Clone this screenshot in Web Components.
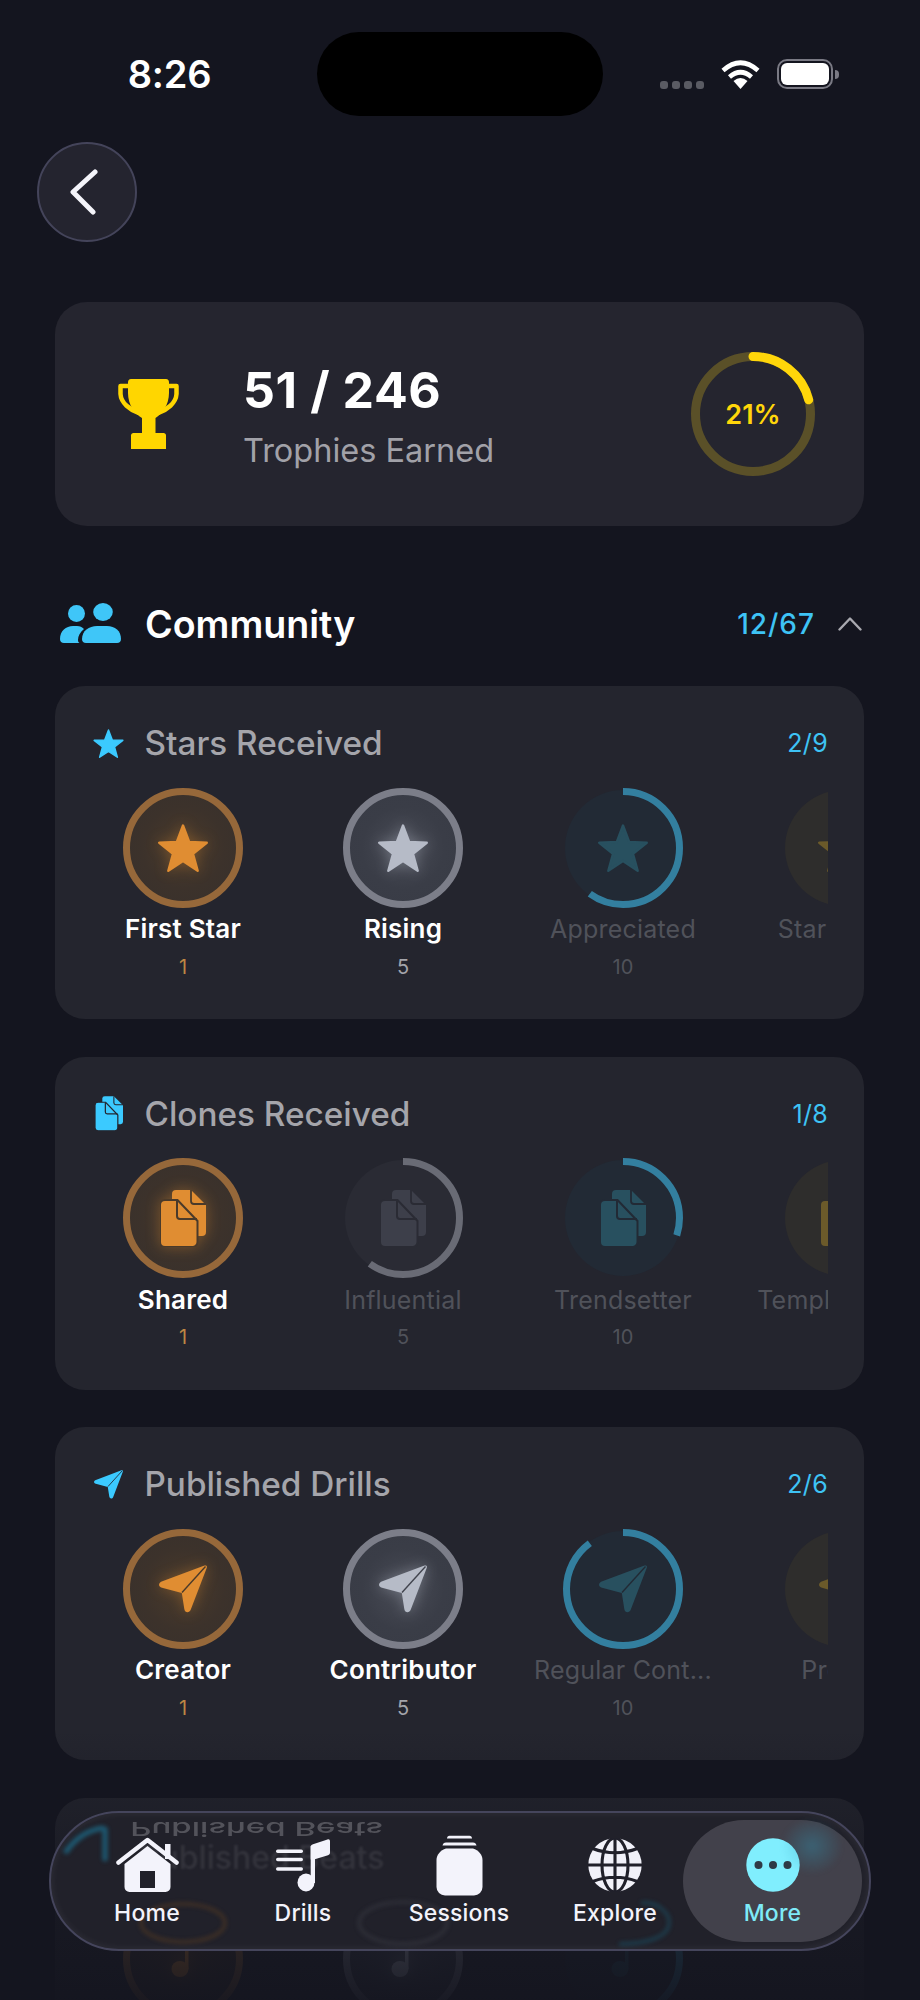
<!DOCTYPE html>
<html>
<head>
<meta charset="utf-8">
<title>Trophies</title>
<style>
    html, body { margin: 0; background: #14151f; }
    body { width: 920px; height: 2000px; overflow: hidden; font-family: Inter, "Noto Sans", sans-serif; }
</style>
</head>
<body>
<trophy-page>
    <status-bar></status-bar>
    <back-button></back-button>
    <trophy-summary earned="51" total="246" percent="21"></trophy-summary>
    <section-header icon="people" count="12/67">Community</section-header>

    <trophy-group icon="star" count="2/9" heading="Stars Received">
        <trophy-badge tier="bronze" icon="star" label="First Star" value="1" progress="100"></trophy-badge>
        <trophy-badge tier="silver" icon="star" label="Rising" value="5" progress="100"></trophy-badge>
        <trophy-badge tier="blue" icon="star" label="Appreciated" value="10" progress="60" locked></trophy-badge>
        <trophy-badge tier="gold" icon="star" label="Star Maker" value="25" progress="0" locked></trophy-badge>
    </trophy-group>
    <trophy-group icon="docs" count="1/8" heading="Clones Received">
        <trophy-badge tier="bronze" icon="docs" label="Shared" value="1" progress="100"></trophy-badge>
        <trophy-badge tier="gray" icon="docs" label="Influential" value="5" progress="60" locked></trophy-badge>
        <trophy-badge tier="blue" icon="docs" label="Trendsetter" value="10" progress="30" locked></trophy-badge>
        <trophy-badge tier="gold" icon="docs" label="Template King" value="25" progress="0" locked></trophy-badge>
    </trophy-group>
    <trophy-group icon="send" count="2/6" heading="Published Drills">
        <trophy-badge tier="bronze" icon="send" label="Creator" value="1" progress="100"></trophy-badge>
        <trophy-badge tier="silver" icon="send" label="Contributor" value="5" progress="100"></trophy-badge>
        <trophy-badge tier="blue" icon="send" label="Regular Cont..." value="10" progress="90" locked></trophy-badge>
        <trophy-badge tier="gold" icon="send" label="Prolific" value="25" progress="0" locked></trophy-badge>
    </trophy-group>
    <trophy-group icon="note" heading="Published Beats">
        <trophy-badge tier="bronze" icon="note" progress="100"></trophy-badge>
        <trophy-badge tier="silver" icon="note" progress="100"></trophy-badge>
        <trophy-badge tier="blue" icon="note" progress="60" locked></trophy-badge>
    </trophy-group>

    <tab-bar slot="overlay">
        <tab-item icon="home" style="--icon-w:63px;--icon-h:56px">Home</tab-item>
        <tab-item icon="drills" style="--icon-w:54px;--icon-h:54px">Drills</tab-item>
        <tab-item icon="bottle" style="--icon-w:47px;--icon-h:61px">Sessions</tab-item>
        <tab-item icon="globe" style="--icon-w:54px;--icon-h:54px">Explore</tab-item>
        <tab-item icon="more" active style="--icon-w:54px;--icon-h:54px">More</tab-item>
    </tab-bar>
</trophy-page>

<script>
const ICONS = {
    star: `<svg viewBox="0 0 50 48"><polygon fill="currentColor" stroke="currentColor" stroke-width="2.4" stroke-linejoin="round" points="25,1.5 31.17,18 48.78,18.77 34.99,29.74 39.69,46.73 25,37 10.31,46.73 15.01,29.74 1.22,18.77 18.83,18"/></svg>`,
    docs: `<svg viewBox="0 0 46 57">
        <path fill="currentColor" d="M16 0H31L46 15V42a4 4 0 0 1-4 4H16a4 4 0 0 1-4-4V4a4 4 0 0 1 4-4Z"/>
        <path fill="none" stroke="var(--cut)" stroke-width="1.8" d="M31 0V11a3 3 0 0 0 3 3H46"/>
        <path fill="currentColor" stroke="var(--cut)" stroke-width="2" d="M5 10H17.5L37.5 31V52a5 5 0 0 1-5 5H5a5 5 0 0 1-5-5V15a5 5 0 0 1 5-5Z"/>
        <path fill="none" stroke="var(--cut)" stroke-width="2" d="M17 11V26a3 3 0 0 0 3 3H37"/>
    </svg>`,
    send: `<svg viewBox="0 0 48 48">
        <path fill="currentColor" d="M45.5.6C47.4-.1 48.4 1 47.7 3L31.8 44.5C30.3 48.5 25.9 48 25.3 44L22.8 28 3 22.8C-.6 21.7-.9 18.6 2 16.8Z"/>
        <path fill="none" stroke="var(--cut)" stroke-width="1.4" d="M46.5 1.5 23 27.5"/>
    </svg>`,
    note: `<svg viewBox="0 0 24 36"><ellipse cx="9" cy="28" rx="8.5" ry="8" fill="currentColor"/><rect x="14" y="2" width="3.5" height="26" fill="currentColor"/></svg>`,
    people: `<svg viewBox="0 0 61 40" fill="currentColor">
        <ellipse cx="16.5" cy="10.5" rx="8.5" ry="8.5"/>
        <ellipse cx="43" cy="9" rx="9.8" ry="9"/>
        <path d="M0 36C0 28 6 23 13 23H17C20 23 22 24 24 26 20 29 18 33 18 37 18 38.5 18.6 39.500 19.500 40H4C1.500 40 0 38.500 0 36Z"/>
        <path d="M22 36C22 28 29 23 37 23H47C55 23 61 28 61 36 61 38.500 59.500 40 57 40H26C23.500 40 22 38.500 22 36Z"/>
    </svg>`,
    trophy: `<svg viewBox="0 0 61 70">
        <path fill="none" stroke="#ffd600" stroke-width="4.500" stroke-linejoin="round" d="M14 7H2.500V15C3 24 12 31 21 34M47 7H58.500V15C58 24 49 31 40 34"/>
        <path fill="#ffd600" d="M13 0H48C50 0 51 1.500 51 3.500V14C51 26 44 35 37.500 39V56H24V39C17 35 10 26 10 14V3.500C10 1.500 11 0 13 0Z"/>
        <path fill="#ffd600" d="M15.500 54H45.500C47 54 48 55 48 56.500V70H13V56.500C13 55 14 54 15.500 54Z"/>
    </svg>`,
    home: `<svg viewBox="0 0 63 56">
        <path fill="#f3f3fb" d="M31.500 9 54.500 27V50a5 5 0 0 1-5 5H13.500a5 5 0 0 1-5-5V27ZM24 34V51H39V34Z" fill-rule="evenodd"/>
        <rect x="49" y="7" width="5.500" height="15" fill="#f3f3fb"/>
        <path fill="none" stroke="#f3f3fb" stroke-width="4.500" stroke-linecap="round" stroke-linejoin="round" d="M2.500 25.500 31.500 3 60.500 25.500"/>
    </svg>`,
    drills: `<svg viewBox="0 0 54 54" fill="#f3f3fb">
        <rect x="0" y="11.500" width="27" height="3.400" rx="1.700"/>
        <rect x="0" y="19.800" width="27" height="3.400" rx="1.700"/>
        <rect x="0" y="29.300" width="27" height="3.400" rx="1.700"/>
        <ellipse cx="30" cy="44.500" rx="8.500" ry="9" />
        <rect x="34.700" y="8" width="4.300" height="37"/>
        <path d="M34.700 9C34.700 7.500 35.500 6.700 37 6.200L51.500 1.500C53 1 54 1.800 54 3.300V14.500C54 16 53.300 16.800 52 17.200L38 21.500H34.700Z"/>
    </svg>`,
    bottle: `<svg viewBox="0 0 47 61" fill="#f3f3fb">
        <path d="M11 3.500C11 2 12 .8 13.500 .8H33.500C35 .8 36 2 36 3.500H11Z"/>
        <path d="M6.500 10.500C7 8.500 8 7.500 10 7.500H37C39 7.500 40 8.500 40.500 10.500Z"/>
        <path d="M10 13.500H37C42.500 15.500 46.500 19.500 46.500 25V52a8.500 8.500 0 0 1-8.500 8.500H9a8.500 8.500 0 0 1-8.500-8.500V25C.5 19.500 4.500 15.500 10 13.500Z"/>
    </svg>`,
    globe: `<svg viewBox="0 0 54 54">
        <circle cx="27" cy="27" r="26.700" fill="#f1f1f9"/>
        <g fill="none" stroke="#20202a" stroke-width="3.100">
            <ellipse cx="27" cy="27" rx="13" ry="27"/>
            <path d="M27 0V54M0 27H54M4.500 10.500Q27 19 49.500 10.500M4.500 43.500Q27 35 49.500 43.500"/>
        </g>
    </svg>`,
    more: `<svg viewBox="0 0 54 54"><circle cx="27" cy="27" r="26.700" fill="#80eefe"/><g fill="#2e3a46"><circle cx="12.500" cy="27" r="4"/><circle cx="27" cy="27" r="4"/><circle cx="41.500" cy="27" r="4"/></g></svg>`
};

const TIERS = {
    bronze: { ring: '#96683a', fill: 'radial-gradient(circle, #4a3a2a 0%, #3c322b 50%, #37302c 100%)', icon: '#e08d32', value: '#bd8744', cut: '#4a3a2a', glow: 'rgba(224,141,50,.35)' },
    silver: { ring: '#7c7e89', fill: 'radial-gradient(circle, #484b55 0%, #3a3d47 50%, #383b45 100%)', icon: '#b6bbc7', value: '#a3a4aa', cut: '#41444e', glow: 'rgba(200,205,220,.35)' },
    blue: { ring: '#337f9f', fill: '#222a35', icon: '#28505f', value: '#50525a', cut: '#222a35' },
    gray: { ring: '#696b75', fill: '#2a2b34', icon: '#3d3f4a', value: '#50525a', cut: '#2a2b34' },
    gold: { ring: 'transparent', fill: '#2e2d2c', icon: '#6b5a2a', value: '#50525a', cut: '#2e2d2c' }
};

class TrophyPage extends HTMLElement {
    connectedCallback() {
        this.attachShadow({ mode: 'open' });
        this.shadowRoot.innerHTML = `
            <style>
                :host {
                    display: block;
                    position: relative;
                    width: 920px;
                    height: 2000px;
                    overflow: hidden;
                    background: #14151f;
                    color: #fff;
                }
                .fade {
                    position: absolute;
                    left: 0;
                    right: 0;
                    top: 1730px;
                    bottom: 0;
                    background: linear-gradient(rgba(20,21,31,0), rgba(20,21,31,.3) 27%, rgba(20,21,31,.78) 70%, rgba(20,21,31,.95) 100%);
                }
            </style>
            <slot></slot>
            <div class="fade"></div>
            <slot name="overlay"></slot>
        `;
    }
}

class StatusBar extends HTMLElement {
    connectedCallback() {
        this.attachShadow({ mode: 'open' });
        this.shadowRoot.innerHTML = `
            <style>
                :host {
                    display: grid;
                    grid-template-columns: 317px 286px 1fr;
                    align-items: center;
                    height: 84px;
                    padding-top: 32px;
                    padding-bottom: 26px;
                }
                .time {
                    font-size: 38px;
                    font-weight: 600;
                    line-height: 44px;
                    text-align: center;
                    padding-left: 22px;
                    letter-spacing: -.2px;
                }
                .island {
                    height: 84px;
                    border-radius: 42px;
                    background: #000;
                }
                .right {
                    display: flex;
                    align-items: flex-end;
                    padding-left: 57px;
                }
                .dots { display: flex; gap: 4.300px; margin-right: 17px; }
                .dots i { width: 7.800px; height: 8px; border-radius: 3px; background: #5a5b63; }
                .battery {
                    box-sizing: border-box;
                    width: 56px;
                    height: 30px;
                    margin-left: 17px;
                    border: 2.500px solid #7a7a84;
                    border-radius: 10px;
                    padding: 2px;
                }
                .battery i { display: block; height: 100%; border-radius: 6px; background: #fff; }
                .nub { width: 4px; height: 9px; margin: 0 0 10px 1.500px; border-radius: 0 4px 4px 0; background: #7a7a84; }
            </style>
            <div class="time">8:26</div>
            <div class="island"></div>
            <div class="right">
                <div class="dots"><i></i><i></i><i></i><i></i></div>
                <svg width="39" height="29" viewBox="0 0 39 29">
                    <path fill="none" stroke="#fff" stroke-width="4.600" d="M2 10.500Q19.500 -5 37 10.500M8.500 17Q19.500 7.500 30.500 17"/>
                    <path fill="#fff" d="M19.500 29 12.500 21Q19.500 15 26.500 21Z"/>
                </svg>
                <div class="battery"><i></i></div>
                <div class="nub"></div>
            </div>
        `;
    }
}

class BackButton extends HTMLElement {
    connectedCallback() {
        this.attachShadow({ mode: 'open' });
        this.shadowRoot.innerHTML = `
            <style>
                :host {
                    display: flex;
                    align-items: center;
                    justify-content: center;
                    box-sizing: border-box;
                    width: 100px;
                    height: 100px;
                    margin-left: 37px;
                    border-radius: 50%;
                    background: #24242f;
                    border: 2px solid #44445a;
                }
            </style>
            <svg width="32" height="46" viewBox="0 0 32 46" style="margin-right:4px">
                <path fill="none" stroke="#f4f4fa" stroke-width="5" stroke-linecap="round" stroke-linejoin="round" d="M26 3 4 23 24 43"/>
            </svg>
        `;
    }
}

class TrophySummary extends HTMLElement {
    connectedCallback() {
        const pct = this.getAttribute('percent');
        this.attachShadow({ mode: 'open' });
        this.shadowRoot.innerHTML = `
            <style>
                :host {
                    display: flex;
                    align-items: center;
                    box-sizing: border-box;
                    width: 809px;
                    height: 224px;
                    margin: 60px 0 0 55px;
                    padding: 0 49px 0 63px;
                    border-radius: 32px;
                    background: #25252f;
                }
                .cup { width: 61px; height: 70px; flex: none; margin-right: 64px; }
                .cup svg { display: block; width: 100%; height: 100%; }
                .text { flex: 1; margin-top: 4px; }
                .score { font-size: 50px; font-weight: 700; line-height: 56px; letter-spacing: .6px; }
                .sub { font-size: 32.500px; line-height: 40px; margin-top: 13px; color: #a1a1a8; }
                .ring { display: grid; place-items: center; width: 124px; height: 124px; flex: none; }
                .ring > * { grid-area: 1 / 1; }
                .ring span { font-size: 27px; font-weight: 600; color: #ffd60a; }
            </style>
            <div class="cup">${ICONS.trophy}</div>
            <div class="text">
                <div class="score">${this.getAttribute('earned')} / ${this.getAttribute('total')}</div>
                <div class="sub">Trophies Earned</div>
            </div>
            <div class="ring">
                <svg width="124" height="124" viewBox="0 0 124 124">
                    <circle cx="62" cy="62" r="57.500" fill="none" stroke="#5a5028" stroke-width="9"/>
                    <circle cx="62" cy="62" r="57.500" fill="none" stroke="#ffd60a" stroke-width="9" stroke-linecap="round"
                        pathLength="100" stroke-dasharray="${pct} 100" transform="rotate(-90 62 62)"/>
                </svg>
                <span>${pct}%</span>
            </div>
        `;
    }
}

class SectionHeader extends HTMLElement {
    connectedCallback() {
        this.attachShadow({ mode: 'open' });
        this.shadowRoot.innerHTML = `
            <style>
                :host {
                    display: flex;
                    align-items: center;
                    height: 60px;
                    margin: 68px 0 32px;
                    padding: 0 58px 0 60px;
                }
                .icon { width: 61px; height: 40px; color: #3fc6f8; margin-right: 24px; margin-top: -2px; }
                .icon svg { display: block; }
                .title { flex: 1; font-size: 37.600px; font-weight: 600; line-height: 46px; padding-top: 2px; }
                .count { font-size: 28px; font-weight: 500; color: #3ec3f5; letter-spacing: 1px; }
                .chevron { margin-left: 23px; }
            </style>
            <div class="icon">${ICONS[this.getAttribute('icon')]}</div>
            <div class="title"><slot></slot></div>
            <div class="count">${this.getAttribute('count')}</div>
            <svg class="chevron" width="24" height="14" viewBox="0 0 24 14">
                <path fill="none" stroke="#a9a9b0" stroke-width="2.400" stroke-linecap="round" stroke-linejoin="round" d="M1.500 12.500 12 1.500 22.500 12.500"/>
            </svg>
        `;
    }
}

class TrophyGroup extends HTMLElement {
    connectedCallback() {
        const name = this.getAttribute('icon');
        const count = this.getAttribute('count') || '';
        const size = { star: [31, 29], docs: [28, 35], send: [29, 29], note: [24, 36] }[name];
        this.attachShadow({ mode: 'open' });
        this.shadowRoot.innerHTML = `
            <style>
                :host {
                    display: block;
                    box-sizing: border-box;
                    width: 809px;
                    height: 333px;
                    margin: 0 0 37.500px 55px;
                    padding: 37px 36px 0 38px;
                    border-radius: 30px;
                    background: #24252e;
                    --cut: #24252e;
                }
                .head { display: flex; align-items: center; height: 40px; margin-bottom: 24.500px; }
                .icon { width: 31px; margin-right: 20.500px; color: #3bcaff; display: flex; justify-content: center; }
                .icon svg { display: block; width: ${size[0]}px; height: ${size[1]}px; }
                .title { flex: 1; font-size: 33.300px; font-weight: 500; color: #a5a5ab; }
                .count { font-size: 25px; color: #3ec3f5; letter-spacing: .3px; }
                .track { display: flex; gap: 40px; width: 735px; overflow: hidden; }
            </style>
            <div class="head">
                <div class="icon">${ICONS[name]}</div>
                <div class="title">${this.getAttribute('heading')}</div>
                <div class="count">${count}</div>
            </div>
            <div class="track"><slot></slot></div>
        `;
    }
}

class TrophyBadge extends HTMLElement {
    connectedCallback() {
        const tier = TIERS[this.getAttribute('tier')];
        const name = this.getAttribute('icon');
        const locked = this.hasAttribute('locked');
        const progress = this.getAttribute('progress');
        const size = { star: [50, 48], docs: [46, 57], send: [48, 48], note: [24, 36] }[name];
        const label = this.getAttribute('label');
        this.attachShadow({ mode: 'open' });
        this.shadowRoot.innerHTML = `
            <style>
                :host {
                    display: flex;
                    flex-direction: column;
                    align-items: center;
                    flex: none;
                    width: 180px;
                    --cut: ${tier.cut};
                }
                .disc { display: grid; place-items: center; width: 120px; height: 120px; }
                .disc > * { grid-area: 1 / 1; }
                .back { width: 116px; height: 116px; border-radius: 50%; background: ${tier.fill}; }
                .icon { width: ${size[0]}px; height: ${size[1]}px; color: ${tier.icon}; ${tier.glow ? `filter: drop-shadow(0 0 7px ${tier.glow});` : ''} }
                .icon svg { display: block; width: 100%; height: 100%; }
                .label {
                    margin-top: 6.500px;
                    font-size: ${locked ? 25 : 26}px;
                    font-weight: ${locked ? 400 : 600};
                    letter-spacing: .2px;
                    line-height: 30px;
                    white-space: nowrap;
                    color: ${locked ? '#50525a' : '#fff'};
                }
                .value { margin-top: 10.500px; font-size: 20px; line-height: 24px; color: ${tier.value}; }
            </style>
            <div class="disc">
                <div class="back"></div>
                <svg width="120" height="120" viewBox="0 0 120 120">
                    <circle cx="60" cy="60" r="56.500" fill="none" stroke="${tier.ring}" stroke-width="7"
                        pathLength="100" stroke-dasharray="${progress} 100" transform="rotate(-90 60 60)"/>
                </svg>
                <div class="icon">${ICONS[name]}</div>
            </div>
            ${label ? `<div class="label">${label}</div><div class="value">${this.getAttribute('value')}</div>` : ''}
        `;
    }
}

class TabBar extends HTMLElement {
    connectedCallback() {
        this.attachShadow({ mode: 'open' });
        this.shadowRoot.innerHTML = `
            <style>
                :host {
                    position: absolute;
                    left: 49px;
                    top: 1811px;
                    box-sizing: border-box;
                    display: grid;
                    grid-template-columns: repeat(5, 156px);
                    width: 822px;
                    height: 140px;
                    padding: 7px 19px 7px 18px;
                    border: 2px solid #45455c;
                    border-radius: 70px;
                    background: #21212a;
                    box-shadow: inset 0 0 8px rgba(255,255,255,.07);
                }
                .ghost {
                    position: absolute;
                    inset: 0;
                    overflow: hidden;
                    border-radius: 68px;
                }
                .ghost > * { position: absolute; }
                .mirror {
                    left: 83px;
                    top: -4px;
                    font-size: 32px;
                    font-weight: 500;
                    white-space: nowrap;
                    color: rgba(165,165,171,.38);
                    transform: scale(1.03, -.6);
                    filter: blur(.7px);
                }
                .through {
                    left: 88px;
                    top: 25px;
                    font-size: 32px;
                    font-weight: 500;
                    white-space: nowrap;
                    color: rgba(165,165,171,.14);
                    filter: blur(1.200px);
                }
                .art { left: 0; top: 0; filter: blur(2px); opacity: .8; }
                .glare {
                    left: 730px;
                    top: 4px;
                    width: 62px;
                    height: 58px;
                    z-index: 2;
                    background: radial-gradient(closest-side, rgba(50,150,180,.38), rgba(50,150,180,0));
                    filter: blur(2px);
                }
                ::slotted(*) { position: relative; z-index: 1; }
            </style>
            <div class="ghost">
                <div class="mirror">Published Beats</div>
                <div class="through">Published Beats</div>
                <svg class="art" width="818" height="136" viewBox="0 0 818 136" fill="none">
                    <path stroke="#1d6b88" stroke-width="5" d="M14 40Q30 17 53 15"/>
                    <path stroke="#1d6b88" stroke-width="5" d="M54 14V48"/>
                    <ellipse cx="132" cy="110" rx="42" ry="19" stroke="#4a3524" stroke-width="3.500"/>
                    <ellipse cx="352" cy="110" rx="44" ry="21" stroke="#33343d" stroke-width="3.500"/>
                    <path stroke="#1c4658" stroke-width="3.500" d="M590 90C606 88 620 100 618 112 616 124 596 131 568 131"/>
                </svg>
                <div class="glare"></div>
            </div>
            <slot></slot>
        `;
    }
}

class TabItem extends HTMLElement {
    connectedCallback() {
        const active = this.hasAttribute('active');
        this.attachShadow({ mode: 'open' });
        this.shadowRoot.innerHTML = `
            <style>
                :host {
                    display: flex;
                    flex-direction: column;
                    align-items: center;
                    padding-top: 14px;
                    ${active ? 'margin: 0 -13px 0 -10px; border-radius: 61px; background: rgba(68,67,77,.95);' : ''}
                }
                .icon { display: flex; align-items: center; justify-content: center; height: 62px; }
                .icon svg { display: block; width: var(--icon-w); height: var(--icon-h); }
                .label {
                    margin-top: 3px;
                    font-size: 23px;
                    font-weight: 500;
                    letter-spacing: .2px;
                    line-height: 28px;
                    color: ${active ? '#7eeaf8' : '#f3f3fb'};
                }
            </style>
            <div class="icon">${ICONS[this.getAttribute('icon')]}</div>
            <div class="label"><slot></slot></div>
        `;
    }
}

customElements.define('trophy-page', TrophyPage);
customElements.define('status-bar', StatusBar);
customElements.define('back-button', BackButton);
customElements.define('trophy-summary', TrophySummary);
customElements.define('section-header', SectionHeader);
customElements.define('trophy-group', TrophyGroup);
customElements.define('trophy-badge', TrophyBadge);
customElements.define('tab-bar', TabBar);
customElements.define('tab-item', TabItem);
</script>
</body>
</html>
